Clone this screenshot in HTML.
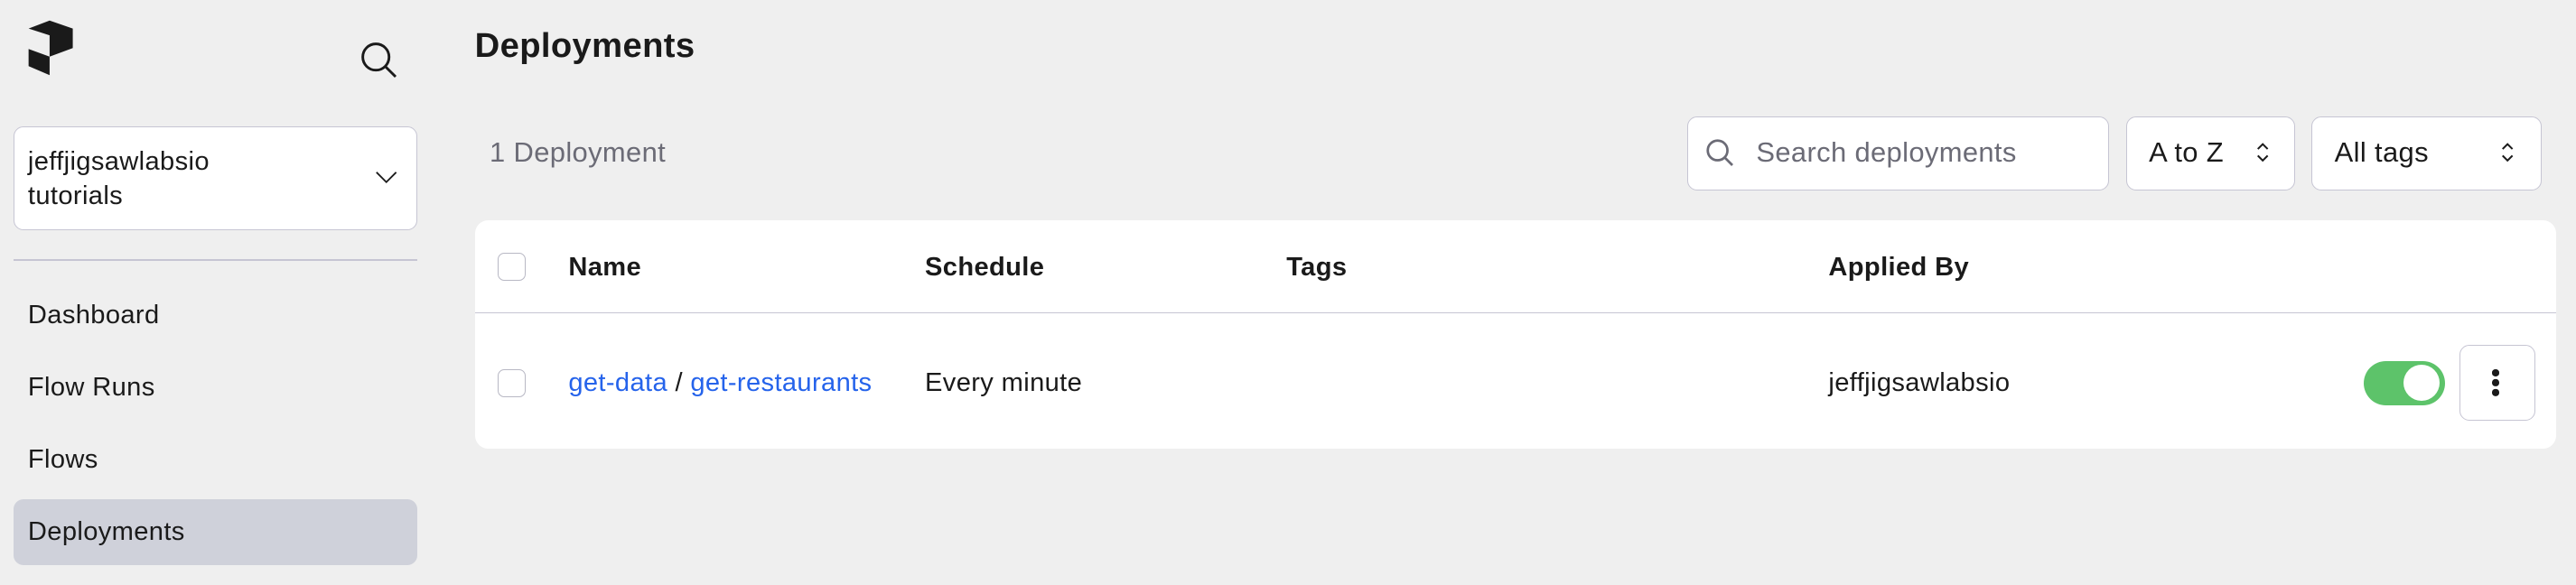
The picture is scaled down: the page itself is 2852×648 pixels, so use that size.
<!DOCTYPE html>
<html><head><meta charset="utf-8"><style>
html,body{margin:0;padding:0;background:#efefef;overflow:hidden}
#w{zoom:1.8189;width:1568px;height:356px;position:relative;font-family:"Liberation Sans",sans-serif;color:#1a1a1a;letter-spacing:0.2px}
.a{position:absolute}
.t{font-size:16px;line-height:20px}
.box{background:#fff;border:1px solid #c6c5d3;border-radius:6px;box-sizing:border-box}
.cb{width:17px;height:17px;border:1px solid #b8b8c4;border-radius:4px;box-sizing:border-box;background:#fff}
a{color:#2563eb;text-decoration:none}
</style></head><body><div id="w">
<svg class="a" style="left:0;top:0" width="60" height="60" viewBox="0 0 60 60"><path d="M17.4 17.4 L30.2 12.5 L44.3 17.4 L44.3 29.3 L30.2 34.5 L30.2 21.5 Z M17.4 29.8 L30.2 34.5 L30.2 45.8 L17.4 40.3 Z" fill="#1a1a1a"/></svg>
<svg class="a" style="left:219px;top:25px" width="24" height="24" viewBox="0 0 24 24" fill="none" stroke="#1a1a1a" stroke-width="1.6"><circle cx="10" cy="10" r="8"/><path d="M16 16 L22 22"/></svg>
<div class="a box" style="left:8px;top:77px;width:246px;height:63px"></div>
<div class="a t" style="left:17px;top:88px;line-height:21px">jeffjigsawlabsio<br>tutorials</div>
<svg class="a" style="left:228px;top:104px" width="14" height="8" viewBox="0 0 14 8" fill="none" stroke="#1a1a1a" stroke-width="1"><path d="M1 1 L7 7 L13 1"/></svg>
<div class="a" style="left:8px;top:158px;width:246px;height:1px;background:#c6c5d3"></div>
<div class="a t" style="left:17px;top:182px">Dashboard</div>
<div class="a t" style="left:17px;top:226px">Flow Runs</div>
<div class="a t" style="left:17px;top:270px">Flows</div>
<div class="a" style="left:8px;top:304px;width:246px;height:40px;background:#cfd1da;border-radius:6px"></div>
<div class="a t" style="left:17px;top:314px">Deployments</div>
<div class="a" style="left:289px;top:16px;font-size:21px;font-weight:bold">Deployments</div>
<div class="a" style="left:298px;top:83px;font-size:17px;color:#6b6b76">1 Deployment</div>
<div class="a box" style="left:1027px;top:71px;width:257px;height:45px"></div>
<svg class="a" style="left:1038px;top:84px" width="18" height="18" viewBox="0 0 18 18" fill="none" stroke="#6b6b76" stroke-width="1.5"><circle cx="7.5" cy="7.5" r="6"/><path d="M12 12 L16.5 16.5"/></svg>
<div class="a" style="left:1069px;top:83px;font-size:17px;color:#6b6b76">Search deployments</div>
<div class="a box" style="left:1294px;top:71px;width:103px;height:45px"></div>
<div class="a" style="left:1308px;top:83px;font-size:17px">A to Z</div>
<div class="a box" style="left:1407px;top:71px;width:140px;height:45px"></div>
<div class="a" style="left:1421px;top:83px;font-size:17px">All tags</div>
<svg class="a" style="left:1373px;top:86px" width="9" height="14" viewBox="0 0 9 14" fill="none" stroke="#1a1a1a" stroke-width="1.1"><path d="M1.5 5 L4.5 2 L7.5 5 M1.5 9 L4.5 12 L7.5 9"/></svg>
<svg class="a" style="left:1522px;top:86px" width="9" height="14" viewBox="0 0 9 14" fill="none" stroke="#1a1a1a" stroke-width="1.1"><path d="M1.5 5 L4.5 2 L7.5 5 M1.5 9 L4.5 12 L7.5 9"/></svg>
<div class="a" style="left:289px;top:134px;width:1267px;height:139px;background:#fff;border-radius:8px"></div>
<div class="a" style="left:289px;top:190px;width:1267px;height:1px;background:#c6c5d3"></div>
<div class="a cb" style="left:303px;top:154px"></div>
<div class="a cb" style="left:303px;top:225px"></div>
<div class="a t" style="left:346px;top:153px;font-weight:bold">Name</div>
<div class="a t" style="left:563px;top:153px;font-weight:bold">Schedule</div>
<div class="a t" style="left:783px;top:153px;font-weight:bold">Tags</div>
<div class="a t" style="left:1113px;top:153px;font-weight:bold">Applied By</div>
<div class="a t" style="left:346px;top:223px"><a>get-data</a> / <a>get-restaurants</a></div>
<div class="a t" style="left:563px;top:223px">Every minute</div>
<div class="a t" style="left:1113px;top:223px">jeffjigsawlabsio</div>
<div class="a" style="left:1439px;top:220px;width:49px;height:27px;border-radius:14px;background:#5dc36a"></div>
<div class="a" style="left:1463px;top:222px;width:22px;height:22px;border-radius:50%;background:#fff"></div>
<div class="a box" style="left:1497px;top:210px;width:46px;height:46px"></div>
<div class="a" style="left:1517px;top:225px;width:4px;height:4px;border-radius:50%;background:#1a1a1a;box-shadow:0 6px 0 #1a1a1a,0 12px 0 #1a1a1a"></div>
</div></body></html>
